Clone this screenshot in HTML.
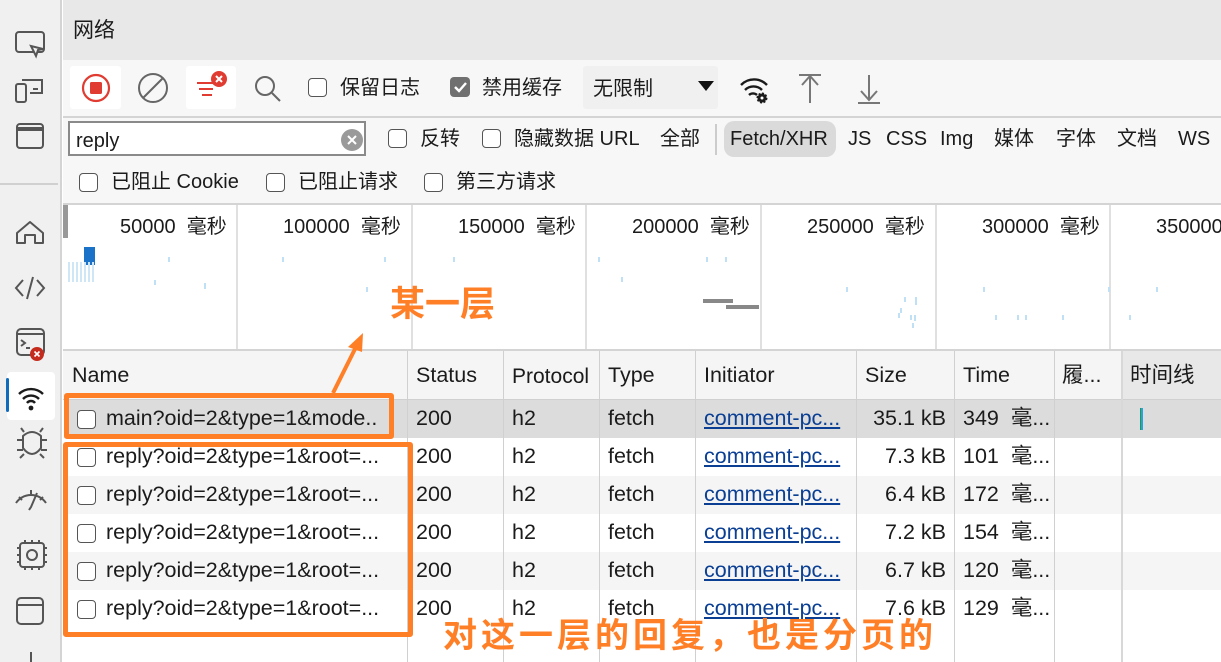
<!DOCTYPE html>
<html><head><meta charset="utf-8"><style>
*{margin:0;padding:0;box-sizing:border-box}
body{width:1221px;height:662px;overflow:hidden;background:#fff;font-family:"Liberation Sans","Noto Sans CJK SC",sans-serif;color:#1b1b1b;position:relative;font-size:20px}
.abs{position:absolute}
.sb{left:0;top:0;width:62px;height:662px;background:#f0f0f0;border-right:2px solid #d4d4d4}
.cb{position:absolute;width:19px;height:19px;border:1.6px solid #555;border-radius:4px;background:#fff}
.t{position:absolute;white-space:nowrap;line-height:1}
.r{font-size:21.5px}
.vl{position:absolute;width:2px;background:#e0e0e0}
.cl{position:absolute;width:1px;background:#d0d0d0;top:351px;height:311px}
.row{position:absolute;left:64px;width:1157px;height:38px}
.link{color:#0a3f94;text-decoration:underline}
.or{color:#ff7f27;font-weight:bold}
</style></head><body>
<div class="abs sb"></div>
<div class="abs" style="left:0;top:183px;width:58px;height:2px;background:#d0d0d0"></div>
<svg class="abs" style="left:0;top:0" width="62" height="662" fill="none" stroke="#555" stroke-width="2">
<rect x="16" y="32" width="28" height="20" rx="3"/><path d="M31 46 L36 56 L38 50 L43 49 Z" fill="#f0f0f0"/>
<rect x="16" y="84" width="10" height="18" rx="2"/><path d="M22 80 h20 v13 h-12 M33 89 h5"/>
<rect x="17" y="124" width="26" height="24" rx="3"/><path d="M17 129 h26" stroke-width="4"/>
<path d="M17 243 v-10 l13 -11 l13 11 v10 h-8 v-8 h-10 v8 z" stroke-linejoin="round"/>
<path d="M23 280 l-7 8 l7 8 M37 280 l7 8 l-7 8 M33 277 l-6 22"/>
<rect x="17" y="329" width="27" height="26" rx="4"/><path d="M17 334 h27 M21 340 l4 3 l-4 3 M26 348 h4"/>
<circle cx="37" cy="354" r="7" fill="#c42b1c" stroke="none"/><path d="M34.5 351.5 l5 5 M39.5 351.5 l-5 5" stroke="#fff" stroke-width="1.6"/>
<path d="M23 436 q9-8 18 0 v12 q-9 12 -18 0z M17 440 h6 M41 440 h6 M17 450 h6 M41 450 h6 M20 458 l4-4 M44 458 l-4-4 M24 432 l-3-4 M40 432 l3-4"/>
<path d="M16 503 a18 18 0 0 1 30 0 M19 497 l3 3 M43 497 l-3 3 M31 490 v4 M37 493 l-6 14 l-2 3"/>
<rect x="20" y="543" width="24" height="24" rx="3"/><circle cx="32" cy="555" r="5"/><path d="M25 540 v3 M32 540 v3 M39 540 v3 M25 567 v3 M32 567 v3 M39 567 v3 M17 548 h3 M17 555 h3 M17 562 h3 M44 548 h3 M44 555 h3 M44 562 h3"/>
<rect x="17" y="598" width="26" height="26" rx="4"/><path d="M17 605 h26"/>
<path d="M31 652 v10"/>
</svg>
<div class="abs" style="left:7px;top:372px;width:48px;height:48px;background:#fff;border-radius:4px"></div>
<div class="abs" style="left:6px;top:378px;width:3px;height:34px;background:#0f6cbd;border-radius:2px"></div>
<svg class="abs" style="left:7px;top:372px" width="48" height="48" fill="none" stroke="#1b1b1b" stroke-width="2.4"><path d="M12 22 a17 17 0 0 1 24 0 M16 27 a11 11 0 0 1 16 0"/><path d="M20 31 a5 5 0 0 1 8 0"/><circle cx="24" cy="36" r="2.4" fill="#1b1b1b" stroke="none"/></svg>

<div class="abs" style="left:63px;top:0;width:1158px;height:60px;background:#e8e8e8"></div>
<div class="t" style="left:73px;top:20px;font-size:21px">网络</div>
<div class="abs" style="left:63px;top:60px;width:1158px;height:144px;background:#f7f7f7"></div>
<div class="abs" style="left:63px;top:116px;width:1158px;height:2px;background:#d4d4d4"></div>
<div class="abs" style="left:70px;top:66px;width:51px;height:43px;background:#fff;border-radius:3px"></div>
<svg class="abs" style="left:70px;top:66px" width="51" height="43"><circle cx="26" cy="22" r="13" fill="none" stroke="#e03c31" stroke-width="2.2"/><rect x="20" y="16" width="12" height="12" rx="1.5" fill="#e03c31"/></svg>
<svg class="abs" style="left:135px;top:70px" width="36" height="36" fill="none" stroke="#666" stroke-width="2"><circle cx="18" cy="18" r="14"/><path d="M8 28 L28 8"/></svg>
<div class="abs" style="left:186px;top:66px;width:50px;height:43px;background:#fff;border-radius:3px"></div>
<svg class="abs" style="left:186px;top:66px" width="50" height="43" stroke="#e03c31" stroke-width="2"><path d="M11 17 h16 M13 23 h14 M16 29 h10"/><circle cx="33" cy="13" r="8" fill="#e03c31" stroke="none"/><path d="M30 10 l6 6 M36 10 l-6 6" stroke="#fff" stroke-width="2"/></svg>
<svg class="abs" style="left:252px;top:72px" width="32" height="32" fill="none" stroke="#666" stroke-width="2"><circle cx="13" cy="14" r="9"/><path d="M20 21 l8 8"/></svg>
<div class="cb" style="left:308px;top:78px"></div>
<div class="t" style="left:340px;top:78px">保留日志</div>
<div class="abs" style="left:450px;top:77px;width:20px;height:20px;background:#707070;border-radius:4px"></div>
<svg class="abs" style="left:450px;top:77px" width="20" height="20"><path d="M5 10 l4 4 l7-8" fill="none" stroke="#fff" stroke-width="2.4"/></svg>
<div class="t" style="left:482px;top:78px">禁用缓存</div>
<div class="abs" style="left:583px;top:66px;width:135px;height:43px;background:#f0f0f0;border-radius:3px"></div>
<div class="t" style="left:593px;top:79px">无限制</div>
<svg class="abs" style="left:697px;top:80px" width="18" height="12"><path d="M1 1 h16 l-8 10z" fill="#111"/></svg>
<svg class="abs" style="left:738px;top:72px" width="34" height="34" fill="none" stroke="#1b1b1b" stroke-width="2.4"><path d="M3 13 a18 18 0 0 1 26 0 M7 18 a12 12 0 0 1 17 0 M11 23 a6 6 0 0 1 8 0"/><circle cx="24" cy="26" r="4.5" fill="#1b1b1b" stroke="#1b1b1b" stroke-width="2" stroke-dasharray="2 1.5"/><circle cx="24" cy="26" r="1.5" fill="#fff" stroke="none"/></svg>
<svg class="abs" style="left:796px;top:72px" width="30" height="34" fill="none" stroke="#777" stroke-width="2"><path d="M3 3 h22 M14 3 v28 M6 13 l8-9 l8 9"/></svg>
<svg class="abs" style="left:855px;top:72px" width="30" height="34" fill="none" stroke="#777" stroke-width="2"><path d="M3 31 h22 M14 3 v25 M6 19 l8 9 l8-9"/></svg>
<div class="abs" style="left:68px;top:121px;width:298px;height:35px;background:#fff;border:2px solid #8a8a8a"></div>
<div class="t" style="left:76px;top:131px">reply</div>
<svg class="abs" style="left:340px;top:128px" width="24" height="24"><circle cx="12" cy="12" r="11" fill="#9a9a9a"/><path d="M8 8 l8 8 M16 8 l-8 8" stroke="#fff" stroke-width="2"/></svg>
<div class="cb" style="left:388px;top:129px"></div>
<div class="t" style="left:420px;top:129px">反转</div>
<div class="cb" style="left:482px;top:129px"></div>
<div class="t" style="left:514px;top:129px">隐藏数据 URL</div>
<div class="t" style="left:660px;top:129px">全部</div>
<div class="abs" style="left:715px;top:124px;width:2px;height:31px;background:#ccc"></div>
<div class="abs" style="left:724px;top:121px;width:112px;height:36px;background:#dadada;border-radius:10px"></div>
<div class="t" style="left:730px;top:129px">Fetch/XHR</div>
<div class="t" style="left:848px;top:129px">JS</div>
<div class="t" style="left:886px;top:129px">CSS</div>
<div class="t" style="left:940px;top:129px">Img</div>
<div class="t" style="left:994px;top:129px">媒体</div>
<div class="t" style="left:1056px;top:129px">字体</div>
<div class="t" style="left:1117px;top:129px">文档</div>
<div class="t" style="left:1178px;top:129px">WS</div>
<div class="cb" style="left:79px;top:173px"></div>
<div class="t" style="left:111px;top:172px">已阻止 Cookie</div>
<div class="cb" style="left:266px;top:173px"></div>
<div class="t" style="left:298px;top:172px">已阻止请求</div>
<div class="cb" style="left:424px;top:173px"></div>
<div class="t" style="left:456px;top:172px">第三方请求</div>
<div class="abs" style="left:63px;top:203px;width:1158px;height:2px;background:#d4d4d4"></div>
<div class="abs" style="left:63px;top:205px;width:5px;height:33px;background:#999"></div>
<div class="vl" style="left:236px;top:205px;height:145px"></div>
<div class="vl" style="left:411px;top:205px;height:145px"></div>
<div class="vl" style="left:585px;top:205px;height:145px"></div>
<div class="vl" style="left:760px;top:205px;height:145px"></div>
<div class="vl" style="left:935px;top:205px;height:145px"></div>
<div class="vl" style="left:1109px;top:205px;height:145px"></div>
<div class="t" style="left:120px;top:217px">50000&nbsp; 毫秒</div>
<div class="t" style="left:283px;top:217px">100000&nbsp; 毫秒</div>
<div class="t" style="left:458px;top:217px">150000&nbsp; 毫秒</div>
<div class="t" style="left:632px;top:217px">200000&nbsp; 毫秒</div>
<div class="t" style="left:807px;top:217px">250000&nbsp; 毫秒</div>
<div class="t" style="left:982px;top:217px">300000&nbsp; 毫秒</div>
<div class="t" style="left:1156px;top:217px">350000</div>
<div class="abs" style="left:84px;top:247px;width:11px;height:18px;background:#1a73c8"></div>
<div class="abs" style="left:68px;top:262px;width:26px;height:20px;background:repeating-linear-gradient(90deg,#cfe6f7 0 2px,transparent 2px 4px)"></div>
<div class="abs" style="left:703px;top:299px;width:30px;height:4px;background:#888"></div>
<div class="abs" style="left:726px;top:305px;width:33px;height:4px;background:#888"></div>
<svg class="abs" style="left:63px;top:205px" width="1158" height="145" stroke="#bfe0f5" stroke-width="2">
<path d="M106 52 v5 M92 75 v5 M142 78 v6 M220 52 v5 M304 82 v5 M322 52 v5 M391 52 v5 M536 52 v5 M559 72 v5 M644 52 v5 M663 52 v5 M784 82 v5 M842 92 v5 M848 110 v5 M853 92 v8 M836 108 v5 M838 103 v5 M852 110 v6 M850 118 v5 M1094 82 v5 M921 82 v5 M933 110 v5 M955 110 v5 M963 110 v5 M1000 110 v5 M1046 82 v5 M1067 110 v5"/>
</svg>
<div class="abs" style="left:63px;top:349px;width:1158px;height:2px;background:#d4d4d4"></div>
<div class="abs" style="left:63px;top:351px;width:1058px;height:49px;background:#f5f5f5"></div>
<div class="abs" style="left:1121px;top:351px;width:100px;height:49px;background:#e8e8e8"></div>
<div class="abs" style="left:63px;top:399px;width:1158px;height:1px;background:#d0d0d0"></div>
<div class="row" style="top:400px;background:#dcdcdc"></div>
<div class="row" style="top:476px;background:#f5f5f5"></div>
<div class="row" style="top:552px;background:#f5f5f5"></div>
<div class="cl" style="left:407px"></div><div class="cl" style="left:503px"></div><div class="cl" style="left:599px"></div><div class="cl" style="left:695px"></div><div class="cl" style="left:856px"></div><div class="cl" style="left:954px"></div><div class="cl" style="left:1054px"></div>
<div class="abs" style="left:1121px;top:351px;width:2px;height:311px;background:#d8d8d8"></div>
<div class="t r" style="left:72px;top:365px">Name</div>
<div class="t r" style="left:416px;top:365px">Status</div>
<div class="t" style="left:512px;top:366px;font-size:21px">Protocol</div>
<div class="t r" style="left:608px;top:365px">Type</div>
<div class="t r" style="left:704px;top:365px">Initiator</div>
<div class="t r" style="left:865px;top:365px">Size</div>
<div class="t r" style="left:963px;top:365px">Time</div>
<div class="t r" style="left:1062px;top:365px">履...</div>
<div class="t r" style="left:1130px;top:365px">时间线</div>
<div class="abs" style="left:1140px;top:408px;width:3px;height:22px;background:#2aa0e8;border-left:1px solid #1a9f3a"></div>

<div class="cb" style="left:77px;top:410px"></div><div class="t r" style="left:106px;top:408px">main?oid=2&amp;type=1&amp;mode..</div>
<div class="t r" style="left:416px;top:408px">200</div><div class="t r" style="left:512px;top:408px">h2</div><div class="t r" style="left:608px;top:408px">fetch</div><div class="t r link" style="left:704px;top:408px">comment-pc...</div><div class="t r" style="right:275px;top:408px">35.1 kB</div><div class="t r" style="left:963px;top:408px">349&nbsp; 毫...</div>

<div class="cb" style="left:77px;top:448px"></div><div class="t r" style="left:106px;top:446px">reply?oid=2&amp;type=1&amp;root=...</div>
<div class="t r" style="left:416px;top:446px">200</div><div class="t r" style="left:512px;top:446px">h2</div><div class="t r" style="left:608px;top:446px">fetch</div><div class="t r link" style="left:704px;top:446px">comment-pc...</div><div class="t r" style="right:275px;top:446px">7.3 kB</div><div class="t r" style="left:963px;top:446px">101&nbsp; 毫...</div>

<div class="cb" style="left:77px;top:486px"></div><div class="t r" style="left:106px;top:484px">reply?oid=2&amp;type=1&amp;root=...</div>
<div class="t r" style="left:416px;top:484px">200</div><div class="t r" style="left:512px;top:484px">h2</div><div class="t r" style="left:608px;top:484px">fetch</div><div class="t r link" style="left:704px;top:484px">comment-pc...</div><div class="t r" style="right:275px;top:484px">6.4 kB</div><div class="t r" style="left:963px;top:484px">172&nbsp; 毫...</div>

<div class="cb" style="left:77px;top:524px"></div><div class="t r" style="left:106px;top:522px">reply?oid=2&amp;type=1&amp;root=...</div>
<div class="t r" style="left:416px;top:522px">200</div><div class="t r" style="left:512px;top:522px">h2</div><div class="t r" style="left:608px;top:522px">fetch</div><div class="t r link" style="left:704px;top:522px">comment-pc...</div><div class="t r" style="right:275px;top:522px">7.2 kB</div><div class="t r" style="left:963px;top:522px">154&nbsp; 毫...</div>

<div class="cb" style="left:77px;top:562px"></div><div class="t r" style="left:106px;top:560px">reply?oid=2&amp;type=1&amp;root=...</div>
<div class="t r" style="left:416px;top:560px">200</div><div class="t r" style="left:512px;top:560px">h2</div><div class="t r" style="left:608px;top:560px">fetch</div><div class="t r link" style="left:704px;top:560px">comment-pc...</div><div class="t r" style="right:275px;top:560px">6.7 kB</div><div class="t r" style="left:963px;top:560px">120&nbsp; 毫...</div>

<div class="cb" style="left:77px;top:600px"></div><div class="t r" style="left:106px;top:598px">reply?oid=2&amp;type=1&amp;root=...</div>
<div class="t r" style="left:416px;top:598px">200</div><div class="t r" style="left:512px;top:598px">h2</div><div class="t r" style="left:608px;top:598px">fetch</div><div class="t r link" style="left:704px;top:598px">comment-pc...</div><div class="t r" style="right:275px;top:598px">7.6 kB</div><div class="t r" style="left:963px;top:598px">129&nbsp; 毫...</div>

<div class="abs" style="left:64px;top:393px;width:330px;height:46px;border:5px solid #ff7f27;border-radius:3px"></div>
<div class="abs" style="left:63px;top:442px;width:350px;height:195px;border:5px solid #ff7f27;border-radius:3px"></div>
<svg class="abs" style="left:320px;top:325px" width="50" height="72"><path d="M13 68 L37 20" stroke="#ff7f27" stroke-width="4"/><path d="M43 8 L28 22 L42 27 Z" fill="#ff7f27"/></svg>
<div class="t or" style="left:390px;top:287px;font-size:35px">某一层</div>
<div class="t or" style="left:443px;top:619px;font-size:34px;letter-spacing:4px">对这一层的回复，也是分页的</div>
</body></html>
